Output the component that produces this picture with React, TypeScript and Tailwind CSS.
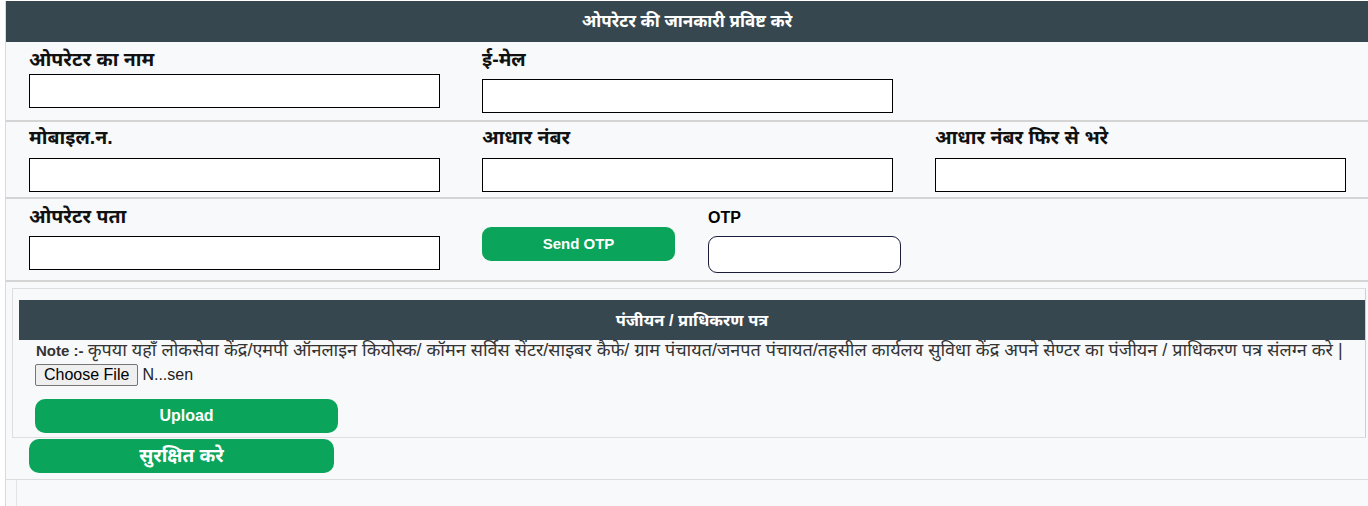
import React from "react";

const font = "font-['Liberation_Sans','Noto_Sans',sans-serif]";

function Field({ label, mb, className = "" }: { label: string; mb: string; className?: string }) {
  return (
    <div className={`w-[453px] shrink-0 ${className}`}>
      <div className={`h-[26px] leading-[26px] text-[19.5px] font-bold text-[#111] ${mb}`}>{label}</div>
      <div className="w-[411px] h-[34px] border border-black bg-white" />
    </div>
  );
}

export default function App() {
  return (
    <div className={`min-h-[506px] bg-white ${font}`}>
      <div className="ml-[5px] mt-px min-h-[505px] border-l border-[#d9d9d9] bg-[#f8f9fa] flex flex-col">
        <div className="h-[41px] bg-[#37474f] flex items-center justify-center text-white font-bold text-[17px]">
          ओपरेटर की जानकारी प्रविष्ट करे
        </div>

        {/* Row 1 */}
        <div className="h-[80px] border-b-2 border-[#d4d4d4] flex pl-[23px] pt-[4px]">
          <Field label="ओपरेटर का नाम" mb="mb-[2px]" />
          <Field label="ई-मेल" mb="mb-[7px]" />
        </div>

        {/* Row 2 */}
        <div className="h-[77px] border-b-2 border-[#d4d4d4] flex pl-[23px] pt-[2px]">
          <Field label="मोबाइल.न." mb="mb-[8px]" />
          <Field label="आधार नंबर" mb="mb-[8px]" />
          <Field label="आधार नंबर फिर से भरे" mb="mb-[8px]" />
        </div>

        {/* Row 3 */}
        <div className="h-[83px] border-b-2 border-[#d4d4d4] flex pl-[23px] pt-[4px]">
          <Field label="ओपरेटर पता" mb="mb-[7px]" />
          <div className="w-[226px] shrink-0 pt-[24px]">
            <button className="w-[193px] h-[34px] rounded-[9px] bg-[#0aa45a] text-white font-bold text-[15px]">
              Send OTP
            </button>
          </div>
          <div className="shrink-0 pt-[4px]">
            <div className="h-[22px] leading-[22px] text-[16px] font-bold text-black mb-[7px]">OTP</div>
            <div className="w-[193px] h-[37px] rounded-[9px] border border-[#1b1b3a] bg-white" />
          </div>
        </div>

        {/* Upload box */}
        <div className="ml-[6px] mr-[2px] mt-[6px] h-[150px] border border-[#dedede] border-r-[#cfcfcf] flex flex-col">
          <div className="ml-[6px] mt-[11px] h-[40px] bg-[#37474f] flex items-center justify-center text-white font-bold text-[16.5px]">
            पंजीयन / प्राधिकरण पत्र
          </div>
          <div className="pl-[23px] h-[20px] leading-[20px] text-[#333] text-[18px] whitespace-nowrap">
            <span className="font-bold text-[15px]">Note :- </span>
            कृपया यहाँ लोकसेवा केंद्र/एमपी ऑनलाइन कियोस्क/ कॉमन सर्विस सेंटर/साइबर कैफे/ ग्राम पंचायत/जनपत पंचायत/तहसील कार्यलय सुविधा केंद्र अपने सेण्टर का पंजीयन / प्राधिकरण पत्र संलग्न करे |
          </div>
          <div className="pl-[22px] mt-[4px] flex items-center h-[22px]">
            <span className="h-[22px] px-[8px] flex items-center bg-[#efefef] border border-[#767676] rounded-[2px] text-[16px] text-black">
              Choose File
            </span>
            <span className="ml-[4px] text-[16px] text-[#222]">N...sen</span>
          </div>
          <div className="pl-[22px] mt-[13px]">
            <button className="w-[303px] h-[34px] rounded-[10px] bg-[#0aa45a] text-white font-bold text-[16px]">
              Upload
            </button>
          </div>
        </div>

        <div className="h-[42px] border-b border-[#dcdcdc] pl-[23px] pt-[1px]">
          <button className="w-[305px] h-[34px] rounded-[10px] bg-[#0aa45a] text-white font-bold text-[19px]">
            सुरक्षित करे
          </button>
        </div>
        <div className="flex-1 ml-[10px] border-l border-[#e3e3e3]" />
      </div>
    </div>
  );
}
